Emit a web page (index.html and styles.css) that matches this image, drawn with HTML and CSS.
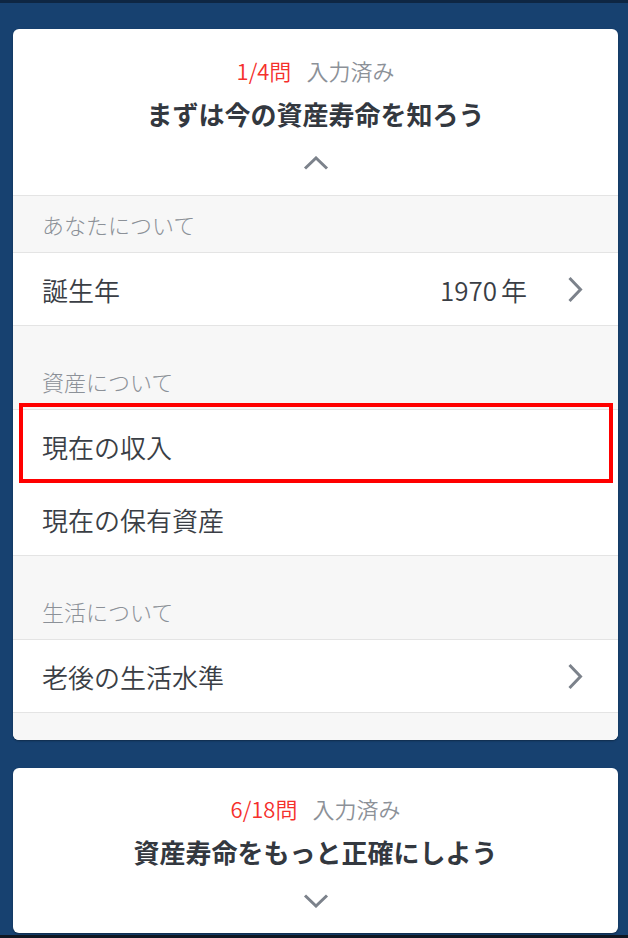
FILE: index.html
```html
<!DOCTYPE html>
<html lang="ja">
<head>
<meta charset="utf-8">
<title>資産寿命</title>
<link rel="stylesheet" href="styles.css">
</head>
<body>
<div class="topbar"></div>
<main class="page">
  <section class="card">
    <header class="card-head">
      <div class="count"><span class="num">1/4問</span><span class="done">入力済み</span></div>
      <h2 class="title">まずは今の資産寿命を知ろう</h2>
      <svg class="toggle" width="26" height="14" viewBox="0 0 26 14"><polyline points="2,12.5 13,2 24,12.5" fill="none" stroke="#7c828b" stroke-width="3"/></svg>
    </header>
    <div class="label">あなたについて</div>
    <div class="row">
      <span class="row-name">誕生年</span>
      <span class="row-value">1970<span class="unit">年</span></span>
      <svg class="chev" width="16" height="27" viewBox="0 0 16 27"><polyline points="2.5,2 13.5,13.5 2.5,25" fill="none" stroke="#7c828b" stroke-width="3"/></svg>
    </div>
    <div class="spacer"></div>
    <div class="label">資産について</div>
    <div class="row highlighted">
      <span class="row-name">現在の収入</span>
      <span class="mark"></span>
    </div>
    <div class="row">
      <span class="row-name">現在の保有資産</span>
    </div>
    <div class="spacer"></div>
    <div class="label">生活について</div>
    <div class="row">
      <span class="row-name">老後の生活水準</span>
      <svg class="chev" width="16" height="27" viewBox="0 0 16 27"><polyline points="2.5,2 13.5,13.5 2.5,25" fill="none" stroke="#7c828b" stroke-width="3"/></svg>
    </div>
    <div class="spacer"></div>
  </section>
  <section class="card card-second">
    <header class="card-head closed">
      <div class="count"><span class="num">6/18問</span><span class="done">入力済み</span></div>
      <h2 class="title">資産寿命をもっと正確にしよう</h2>
      <svg class="toggle" width="26" height="14" viewBox="0 0 26 14"><polyline points="2,1.5 13,12 24,1.5" fill="none" stroke="#7c828b" stroke-width="3"/></svg>
    </header>
  </section>
</main>
<div class="bottombar"></div>
</body>
</html>
```
FILE: styles.css
```css
* { box-sizing: border-box; }
html, body {
  margin: 0;
  padding: 0;
  height: 938px;
  overflow: hidden;
}
body {
  background: #174170;
  font-family: "Noto Sans CJK JP", "Noto Sans", sans-serif;
  color: #3a3e45;
}
.topbar {
  height: 3px;
  background: #0e2643;
}
.page {
  padding: 26px 10px 0 13px;
  display: flex;
  flex-direction: column;
  gap: 28px;
}
.card {
  background: #fff;
  border-radius: 6px;
  overflow: hidden;
  box-shadow: 0 1px 2px rgba(0, 0, 0, 0.35);
}
.card-head {
  height: 167px;
  border-bottom: 1px solid #e4e4e4;
  display: flex;
  flex-direction: column;
  align-items: center;
  padding-top: 27px;
}
.card-head.closed {
  height: 165px;
  border-bottom: none;
  padding-top: 26px;
}
.count {
  height: 28px;
  line-height: 28px;
  font-size: 22px;
  font-weight: 350;
  display: flex;
  gap: 15px;
}
.num { color: #f5302c; }
.done { color: #8c9198; }
.title {
  margin: 14px 0 0;
  height: 32px;
  line-height: 32px;
  font-size: 26px;
  font-weight: bold;
  color: #33383f;
}
.toggle {
  margin-top: 26px;
  display: block;
}
.label {
  height: 57px;
  padding-left: 29px;
  background: #f7f7f7;
  border-bottom: 1px solid #e4e4e4;
  font-size: 22px;
  font-weight: 300;
  line-height: 56px;
  color: #8c9198;
}
.row {
  position: relative;
  height: 73px;
  border-bottom: 1px solid #e4e4e4;
  padding: 0 35px 0 29px;
  display: flex;
  align-items: center;
  font-size: 26px;
  font-weight: 350;
}
.row-name { flex: 1; }
.row-value {
  margin-right: 40px;
}
.unit { margin-left: 4px; }
.chev { display: block; }
.spacer {
  height: 27px;
  background: #f7f7f7;
}
.highlighted { border-bottom-color: #fff; }
.mark {
  position: absolute;
  top: -7px;
  left: 6px;
  right: 5px;
  bottom: -1px;
  border: 4px solid #ff0000;
  pointer-events: none;
}
.bottombar {
  position: absolute;
  left: 0;
  right: 0;
  top: 935px;
  height: 3px;
  background: #101722;
}
```
